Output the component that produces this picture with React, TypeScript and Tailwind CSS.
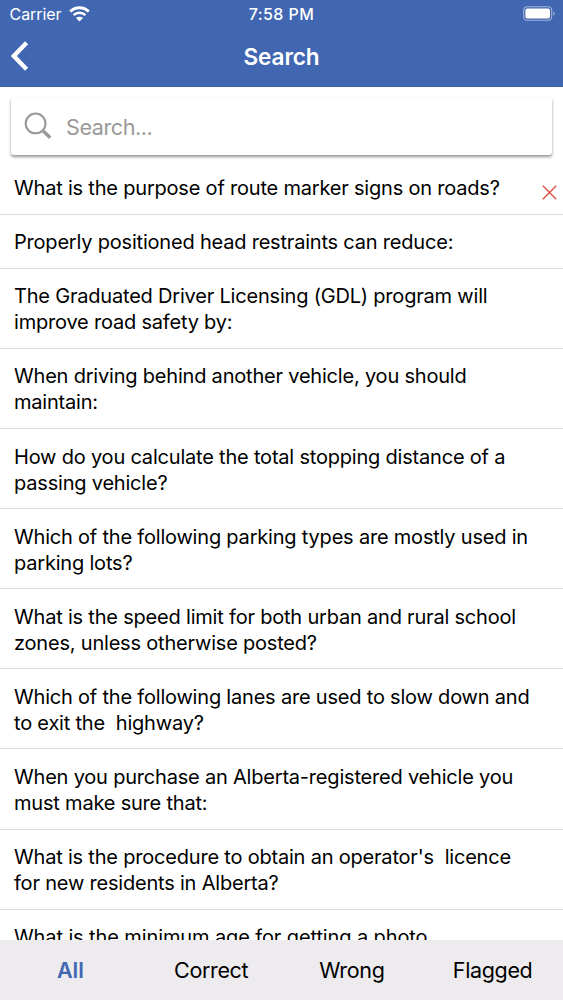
import React, { useState } from 'react';

const questions = [
  { lines: ['What is the purpose of route marker signs on roads?'], wrong: true },
  { lines: ['Properly positioned head restraints can reduce:'] },
  { lines: ['The Graduated Driver Licensing (GDL) program will', 'improve road safety by:'] },
  { lines: ['When driving behind another vehicle, you should', 'maintain:'] },
  { lines: ['How do you calculate the total stopping distance of a', 'passing vehicle?'] },
  { lines: ['Which of the following parking types are mostly used in', 'parking lots?'] },
  { lines: ['What is the speed limit for both urban and rural school', 'zones, unless otherwise posted?'] },
  { lines: ['Which of the following lanes are used to slow down and', 'to exit the  highway?'] },
  { lines: ['When you purchase an Alberta-registered vehicle you', 'must make sure that:'] },
  { lines: ["What is the procedure to obtain an operator's  licence", 'for new residents in Alberta?'] },
  { lines: ['What is the minimum age for getting a photo'] },
];

const filters = ['All', 'Correct', 'Wrong', 'Flagged'];

const StatusBar = () => (
  <div className="relative flex h-[29px] items-center justify-between pl-[9.5px] pr-[7px] text-[16px] leading-[29px]">
    <div className="flex items-center gap-[7px]">
      <span className="tracking-[-0.05px]">Carrier</span>
      <svg className="mb-[2px] h-[16px] w-[21px]" viewBox="0 0 21 16" fill="none" stroke="currentColor">
        <path d="M1.2 5.6a13.2 13.2 0 0 1 18.6 0" strokeWidth="2.8" />
        <path d="M4.6 9.1a8.4 8.4 0 0 1 11.8 0" strokeWidth="2.5" />
        <path d="M10.5 15.6 7 12.1a5 5 0 0 1 7 0z" fill="currentColor" stroke="none" />
      </svg>
    </div>
    <span className="absolute inset-x-0 text-center font-medium tracking-[0.45px]">7:58 PM</span>
    <svg className="mb-[2px] h-[15px] w-[33px]" viewBox="0 0 33 15">
      <rect x="0.7" y="0.7" width="28" height="13.6" rx="3.6" fill="none" stroke="white" strokeOpacity="0.5" strokeWidth="1.1" />
      <rect x="2.4" y="2.4" width="24.6" height="10.2" rx="2" fill="white" />
      <path d="M30.3 5.4a2.4 2.4 0 0 1 0 4.4z" fill="white" fillOpacity="0.5" />
    </svg>
  </div>
);

const App = () => {
  const [active, setActive] = useState('All');

  return (
    <div className="flex h-[1000px] w-[563px] flex-col overflow-hidden bg-white font-['Inter',sans-serif] text-black">
      <header className="h-[87px] shrink-0 border-b border-[#3a5da5] bg-[#4267b2] text-white">
        <StatusBar />
        <div className="relative flex h-[56px] items-center pl-[11px]">
          <button aria-label="Back" className="mb-[2px]">
            <svg className="h-[30px] w-[18px]" viewBox="0 0 18 30" fill="none" stroke="currentColor" strokeWidth="4.4">
              <path d="M15.6 1.8 2.8 15l12.8 13.2" />
            </svg>
          </button>
          <h1 className="pointer-events-none absolute inset-x-0 text-center text-[22.6px] font-semibold leading-[56px] tracking-[-0.15px]">
            Search
          </h1>
        </div>
      </header>

      <div className="shrink-0 px-[11px] pt-[10px]">
        <label className="flex h-[58px] items-center rounded-[3px] bg-white pl-[13px] shadow-[0_2px_3px_rgba(0,0,0,0.42)]">
          <svg className="mb-[1px] h-[28px] w-[28px]" viewBox="0 0 28 28" fill="none" stroke="#999">
            <circle cx="11.6" cy="11.4" r="9.9" strokeWidth="2.1" />
            <path d="M18.4 18.2l2 2" strokeWidth="2.2" />
            <path d="M19.6 19.2l6.6 6.6" strokeWidth="3.4" />
          </svg>
          <input
            className="ml-[14px] h-[58px] w-[440px] pt-[2px] text-[21.6px] tracking-[-0.45px] outline-none placeholder:text-[#999]"
            placeholder="Search..."
          />
        </label>
      </div>

      <main className="min-h-0 flex-1 overflow-hidden pt-[5px]">
        {questions.map((question, index) => (
          <div
            key={index}
            className="flex justify-between border-b border-[#dadada] pb-[12.6px] pl-[14px] pr-[6px] pt-[14.5px] text-[20px] leading-[26px] tracking-[-0.2px] first:pb-[13.3px] last:tracking-[-0.11px]"
          >
            <div className="whitespace-pre">
              {question.lines.map((line) => (
                <div key={line}>{line}</div>
              ))}
            </div>
            {question.wrong && (
              <svg className="mt-[10.5px] h-[15px] w-[15px]" viewBox="0 0 15 15" stroke="#d9493c" strokeWidth="1.3">
                <path d="M.8.8l13.4 13.4M14.2.8.8 14.2" />
              </svg>
            )}
          </div>
        ))}
      </main>

      <nav className="grid h-[60px] shrink-0 grid-cols-4 bg-[#edebed] pt-[1px] text-[21.5px]">
        {filters.map((filter) => (
          <button
            key={filter}
            onClick={() => setActive(filter)}
            className={filter === active ? 'font-semibold text-[#4267b2]' : 'tracking-[-0.35px]'}
          >
            {filter}
          </button>
        ))}
      </nav>
    </div>
  );
};

export default App;
